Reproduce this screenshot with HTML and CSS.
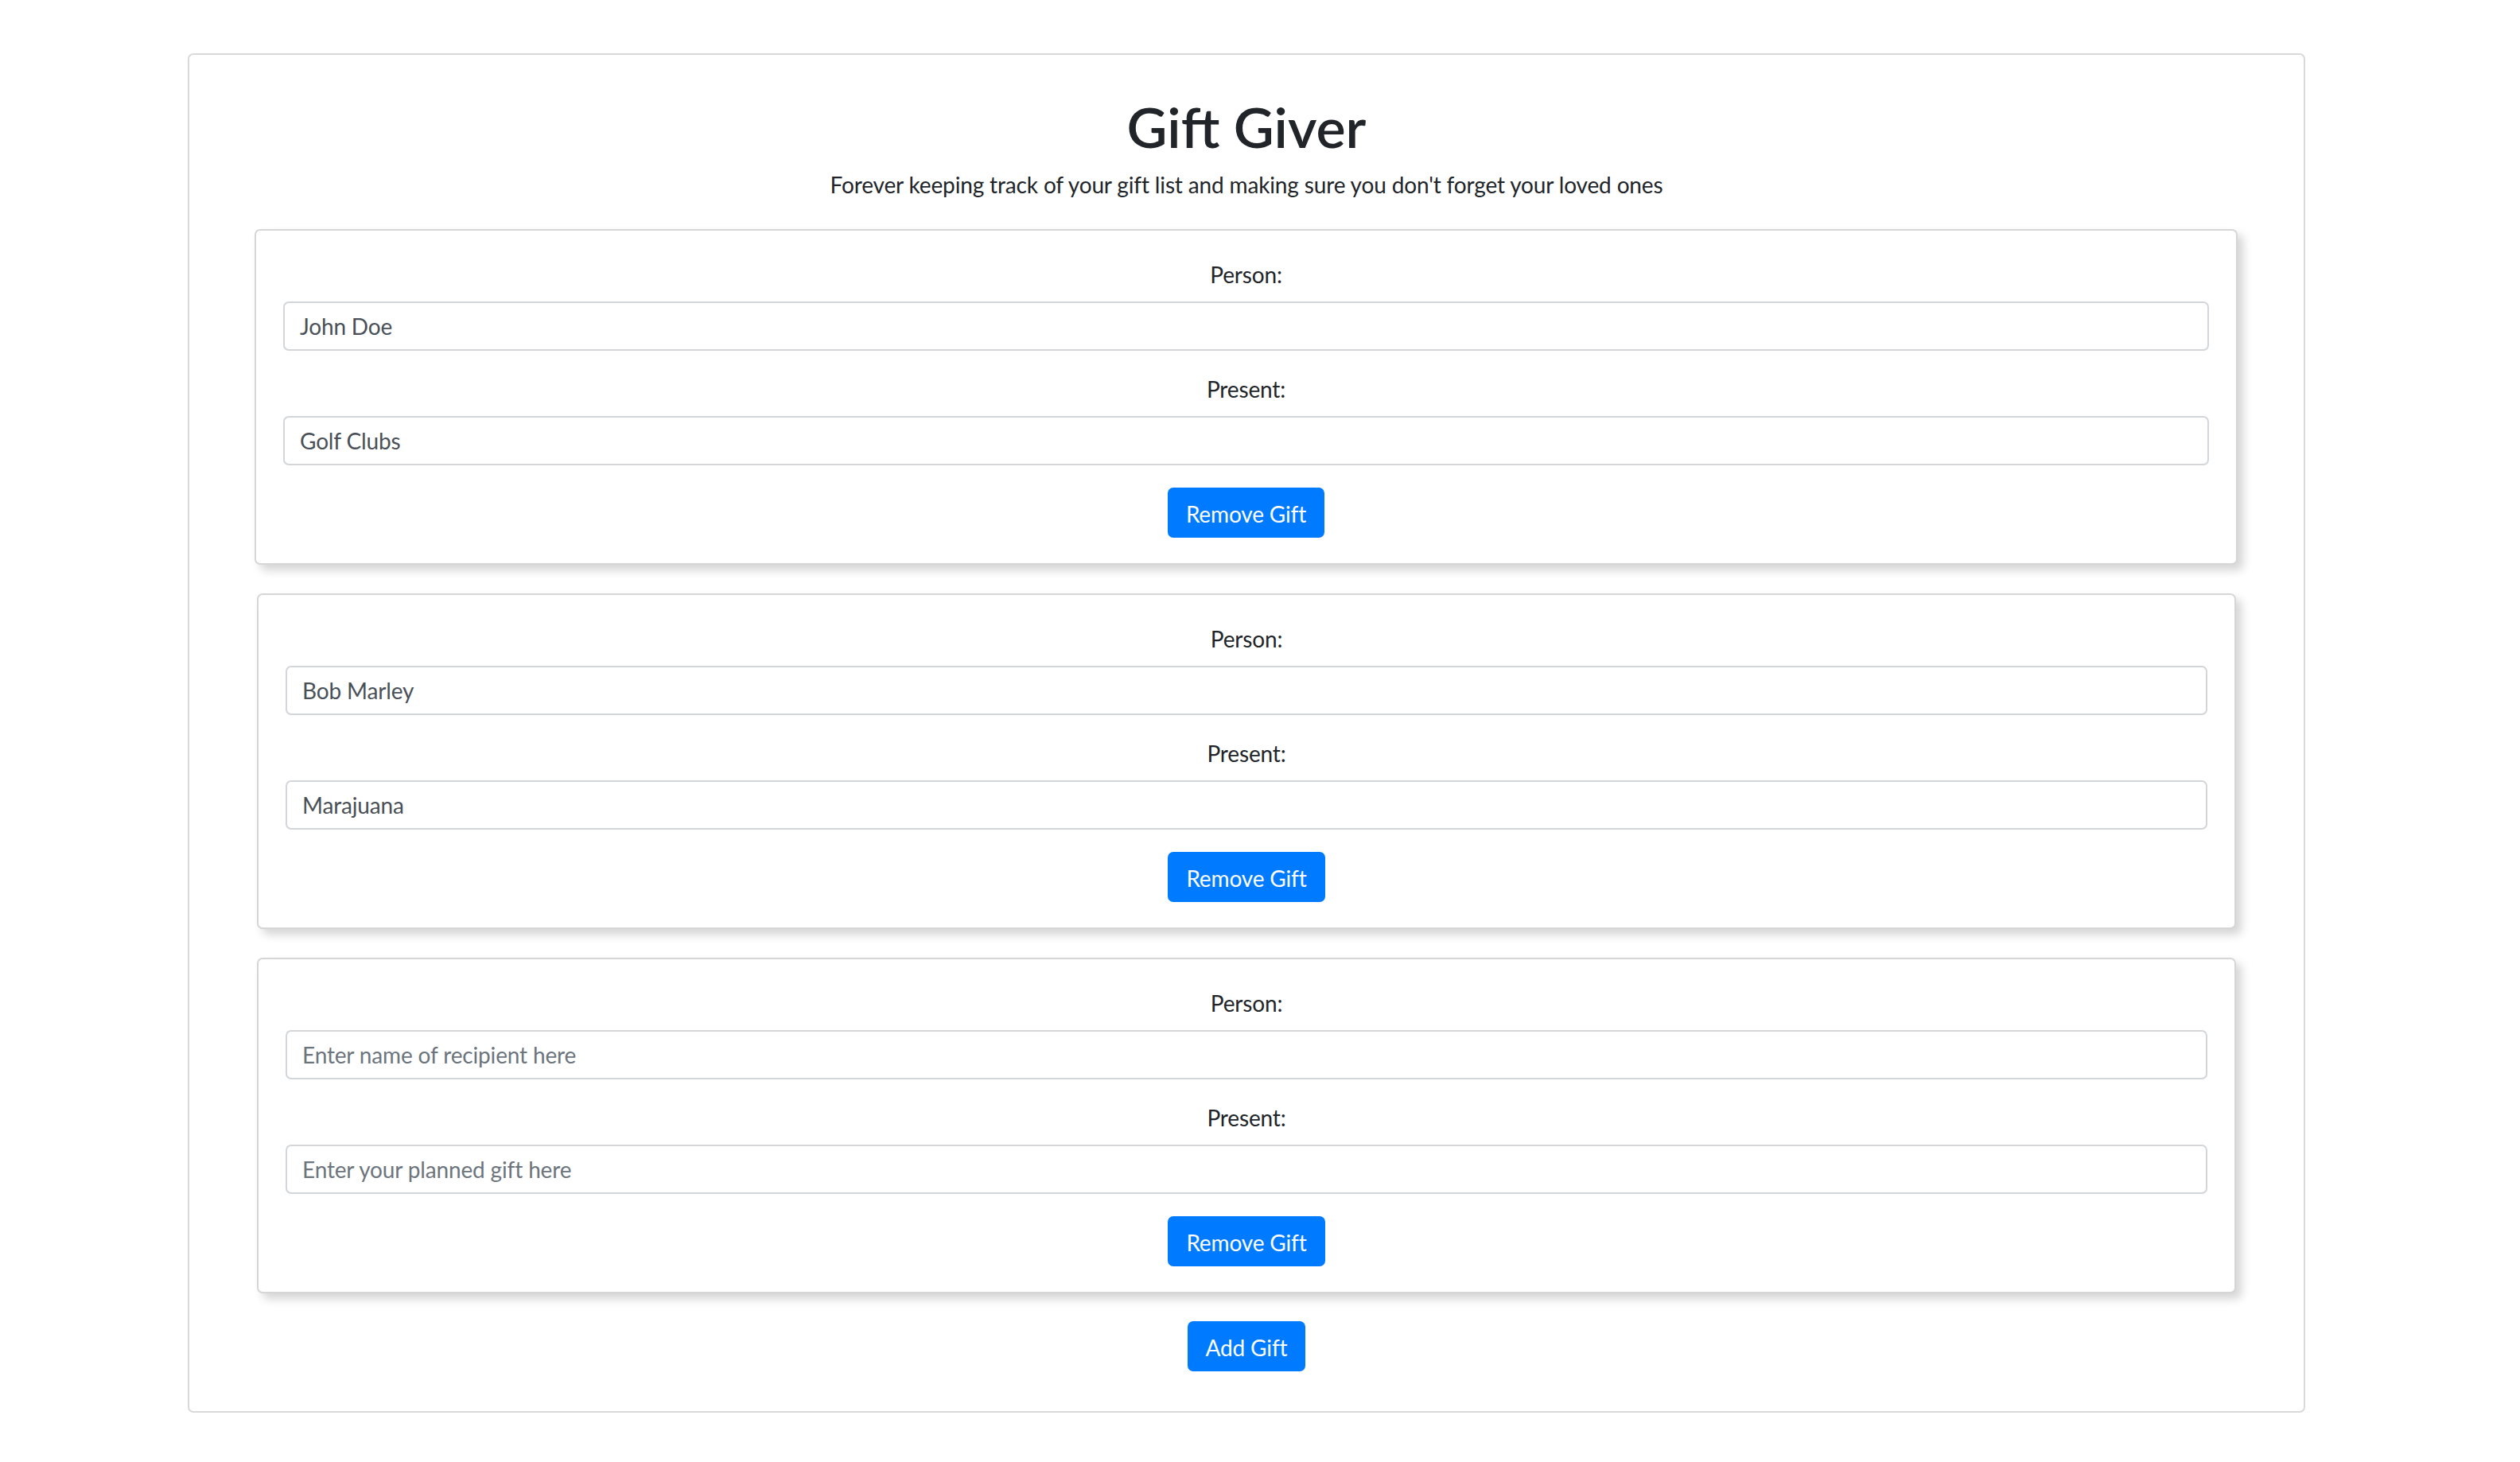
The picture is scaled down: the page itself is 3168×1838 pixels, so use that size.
FILE: index.html
```html
<!DOCTYPE html>
<html lang="en">
<head>
<meta charset="utf-8">
<title>Gift Giver</title>
<link rel="stylesheet" href="styles.css">
</head>
<body>
<div class="app">
  <h1 class="title">Gift Giver</h1>
  <p class="subtitle">Forever keeping track of your gift list and making sure you don't forget your loved ones</p>
  <div class="gift-list">
    <div class="gift-card gift-card--active">
      <div class="form-group">
        <label class="field-label">Person:</label>
        <input class="field-input" type="text" value="John Doe" placeholder="Enter name of recipient here">
      </div>
      <div class="form-group">
        <label class="field-label">Present:</label>
        <input class="field-input" type="text" value="Golf Clubs" placeholder="Enter your planned gift here">
      </div>
      <div class="card-actions"><button class="btn">Remove Gift</button></div>
    </div>
    <div class="gift-card">
      <div class="form-group">
        <label class="field-label">Person:</label>
        <input class="field-input" type="text" value="Bob Marley" placeholder="Enter name of recipient here">
      </div>
      <div class="form-group">
        <label class="field-label">Present:</label>
        <input class="field-input" type="text" value="Marajuana" placeholder="Enter your planned gift here">
      </div>
      <div class="card-actions"><button class="btn">Remove Gift</button></div>
    </div>
    <div class="gift-card">
      <div class="form-group">
        <label class="field-label">Person:</label>
        <input class="field-input" type="text" value="" placeholder="Enter name of recipient here">
      </div>
      <div class="form-group">
        <label class="field-label">Present:</label>
        <input class="field-input" type="text" value="" placeholder="Enter your planned gift here">
      </div>
      <div class="card-actions"><button class="btn">Remove Gift</button></div>
    </div>
  </div>
  <div class="add-row"><button class="btn">Add Gift</button></div>
</div>
</body>
</html>
```

FILE: styles.css
```css
* { box-sizing: border-box; }

html, body {
  margin: 0;
  padding: 0;
  background: #ffffff;
}

body {
  font-family: Lato, "Open Sans", "Noto Sans", sans-serif;
  color: #212529;
  font-size: 28px;
  line-height: 42px;
  letter-spacing: -0.15px;
}

.app {
  width: 2662px;
  margin: 67px 0 60px 236px;
  border: 2px solid #d9d9d9;
  border-radius: 7px;
  padding: 48px 85px 50px;
}

.title {
  margin: 0 0 10px;
  font-size: 70px;
  line-height: 84px;
  font-weight: 600;
  text-align: center;
  color: #212529;
  letter-spacing: 0;
}

.subtitle {
  margin: 0 0 35px;
  font-size: 28px;
  line-height: 42px;
  text-align: center;
}

.gift-list {
  display: flex;
  flex-direction: column;
  gap: 36px;
}

.gift-card {
  border: 2px solid #d6d6d6;
  border-radius: 7px;
  padding: 35px 34px 32px;
  background: #fff;
  box-shadow: 7px 7px 12px rgba(0, 0, 0, 0.17);
}

.gift-card--active {
  margin: 0 -2px 0 -3px;
}

.form-group {
  margin-bottom: 28px;
}

.field-label {
  display: block;
  text-align: center;
  font-size: 28px;
  line-height: 40px;
  margin-bottom: 14px;
  color: #212529;
}

.field-input {
  display: block;
  width: 100%;
  height: 62px;
  border: 2px solid #d2d5da;
  border-radius: 7px;
  padding: 0 19px;
  font-family: inherit;
  font-size: 28px;
  letter-spacing: -0.15px;
  color: #495057;
  background: #fff;
}

.field-input::placeholder {
  color: #6c757d;
  opacity: 1;
}

.card-actions,
.add-row {
  display: flex;
  justify-content: center;
}

.add-row {
  margin-top: 35px;
}

.btn {
  font-family: inherit;
  font-size: 28px;
  line-height: 42px;
  letter-spacing: -0.15px;
  height: 63px;
  padding: 10px 21px;
  border: 2px solid #007bff;
  border-radius: 7px;
  background: #007bff;
  color: #ffffff;
  cursor: pointer;
}
```
